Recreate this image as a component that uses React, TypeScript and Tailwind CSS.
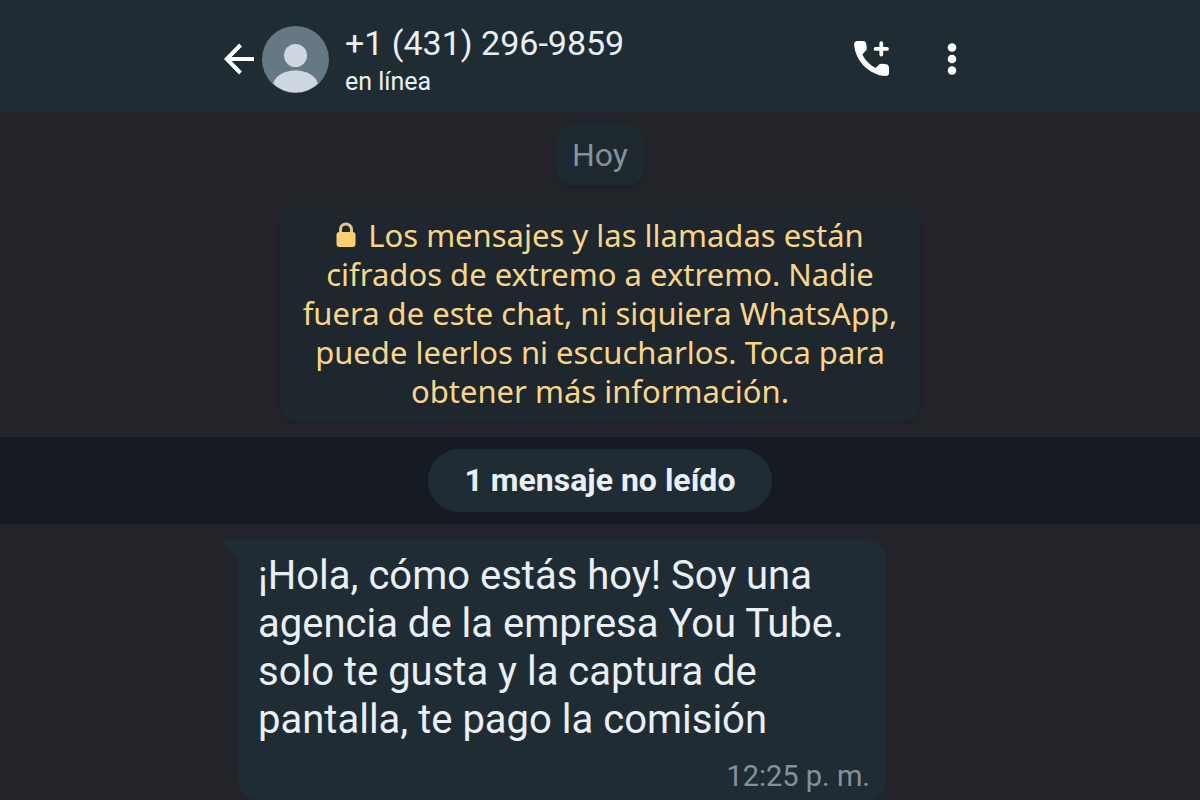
import type { ReactNode } from "react";

function ArrowBackIcon() {
  return (
    <svg viewBox="0 0 32 32" className="size-8" fill="none" stroke="currentColor" strokeWidth="4" aria-hidden="true">
      <path d="M32 16H5" />
      <path d="M18.500 2 4.800 16 18.500 30" strokeLinejoin="miter" />
    </svg>
  );
}

function AvatarIcon() {
  return (
    <svg viewBox="0 0 67 67" className="size-[67px]" aria-hidden="true">
      <defs>
        <clipPath id="avatar-clip">
          <circle cx="33.5" cy="33.5" r="33" />
        </clipPath>
      </defs>
      <circle cx="33.5" cy="33.5" r="33.5" fill="#657884" />
      <g clipPath="url(#avatar-clip)" fill="#cfd8e0">
        <circle cx="33.5" cy="29.5" r="11.5" />
        <path d="M11 60c0-9 10-15.500 22.500-15.500S56 51 56 60v9H11z" />
      </g>
    </svg>
  );
}

function AddCallIcon() {
  return (
    <svg viewBox="0 0 36 36" className="size-9" fill="currentColor" aria-hidden="true">
      <path d="M3.200 0h5.600c1.900 0 3.300 1.200 3.500 3l.4 4c.1 1.300-.3 2.300-1.100 3.100L8.300 13.400c2.900 5.800 7.500 10.600 13.300 13.600l3.200-3.200c.9-.9 1.900-1.200 3.100-1.100l4 .5c1.900.2 3.100 1.600 3.100 3.400v5.400c0 1.800-1.400 3.200-3.200 3.100C15.500 34.200 1.300 20.400.1 3.300 0 1.500 1.400 0 3.200 0z" />
      <path d="M27.300 2.200V13.600M21.600 7.900H33" stroke="currentColor" strokeWidth="3.800" strokeLinecap="round" />
    </svg>
  );
}

function MoreIcon() {
  return (
    <svg viewBox="0 0 12 32" className="h-8 w-3" fill="currentColor" aria-hidden="true">
      <circle cx="6" cy="4.500" r="4.300" />
      <circle cx="6" cy="16" r="4.300" />
      <circle cx="6" cy="27.500" r="4.300" />
    </svg>
  );
}

function LockIcon() {
  return (
    <svg viewBox="0 0 20 26" className="mr-3 inline-block h-[26px] w-5 align-[-1px]" aria-hidden="true">
      <path d="M4.500 12V7.500a5.500 5.500 0 0 1 11 0V12" fill="none" stroke="#e5c78a" strokeWidth="3" />
      <rect x="0.500" y="10" width="19" height="15" rx="3" fill="#ffcf72" />
    </svg>
  );
}

function Column({ children }: { children: ReactNode }) {
  return <div className="mx-auto w-full max-w-[756px]">{children}</div>;
}

const noticeLines = [
  "cifrados de extremo a extremo. Nadie",
  "fuera de este chat, ni siquiera WhatsApp,",
  "puede leerlos ni escucharlos. Toca para",
  "obtener más información.",
];

const messageLines = [
  "¡Hola, cómo estás hoy! Soy una",
  "agencia de la empresa You Tube.",
  "solo te gusta y la captura de",
  "pantalla, te pago la comisión",
];

export default function App() {
  return (
    <div className="min-h-screen bg-[#222429] font-['Roboto','Noto_Sans',sans-serif] text-[#e9eff4]">
      <header className="bg-[#202c33]">
        <Column>
          <div className="flex h-28 items-center pt-[6px]">
            <button type="button" aria-label="Atrás" className="text-white">
              <ArrowBackIcon />
            </button>
            <div className="ml-2">
              <AvatarIcon />
            </div>
            <div className="ml-4 flex-1 pt-1">
              <h1 className="text-[34px] leading-[42px]">+1 (431) 296-9859</h1>
              <p className="text-[25px] leading-9">en línea</p>
            </div>
            <button type="button" aria-label="Añadir llamada" className="text-white">
              <AddCallIcon />
            </button>
            <button type="button" aria-label="Más opciones" className="mr-5 ml-14 text-white">
              <MoreIcon />
            </button>
          </div>
        </Column>
      </header>

      <main>
        <div className="flex flex-col items-center gap-5 pt-3 pb-4">
          <div className="rounded-2xl bg-[#1e282f] px-4 py-[11px] text-[32px] leading-10 text-[#84919a] shadow-sm">Hoy</div>
          <button
            type="button"
            className="w-full max-w-[640px] rounded-2xl bg-[#1d272d] py-[10px] text-center font-['Noto_Sans','Roboto',sans-serif] text-[31px] leading-[39px] text-[#f9d58b] shadow-sm"
          >
            <span className="block">
              <LockIcon />
              Los mensajes y las llamadas están
            </span>
            {noticeLines.map((line) => (
              <span key={line} className="block">
                {line}
              </span>
            ))}
          </button>
        </div>

        <div className="flex justify-center bg-[#161b23] py-3">
          <div className="rounded-full bg-[#202c33] px-[37px] py-3 text-[32px] leading-[39px] font-bold">1 mensaje no leído</div>
        </div>

        <Column>
          <article className="relative mt-4 ml-4 max-w-[648px] rounded-[20px] rounded-tl-none bg-[#202c33] px-5 pt-3 pb-1">
            <svg viewBox="0 0 16 20" className="absolute top-0 -left-4 h-5 w-4" fill="#202c33" aria-hidden="true">
              <path d="M3 0H16V20L1.500 4C0 2 .8 0 3 0z" />
            </svg>
            <p className="text-[40px] leading-[48px]">
              {messageLines.map((line) => (
                <span key={line} className="block">
                  {line}
                </span>
              ))}
            </p>
            <time className="mt-3 -mr-1 block text-right text-[29px] leading-10 text-[#84919a]">12:25 p. m.</time>
          </article>
        </Column>
      </main>
    </div>
  );
}
